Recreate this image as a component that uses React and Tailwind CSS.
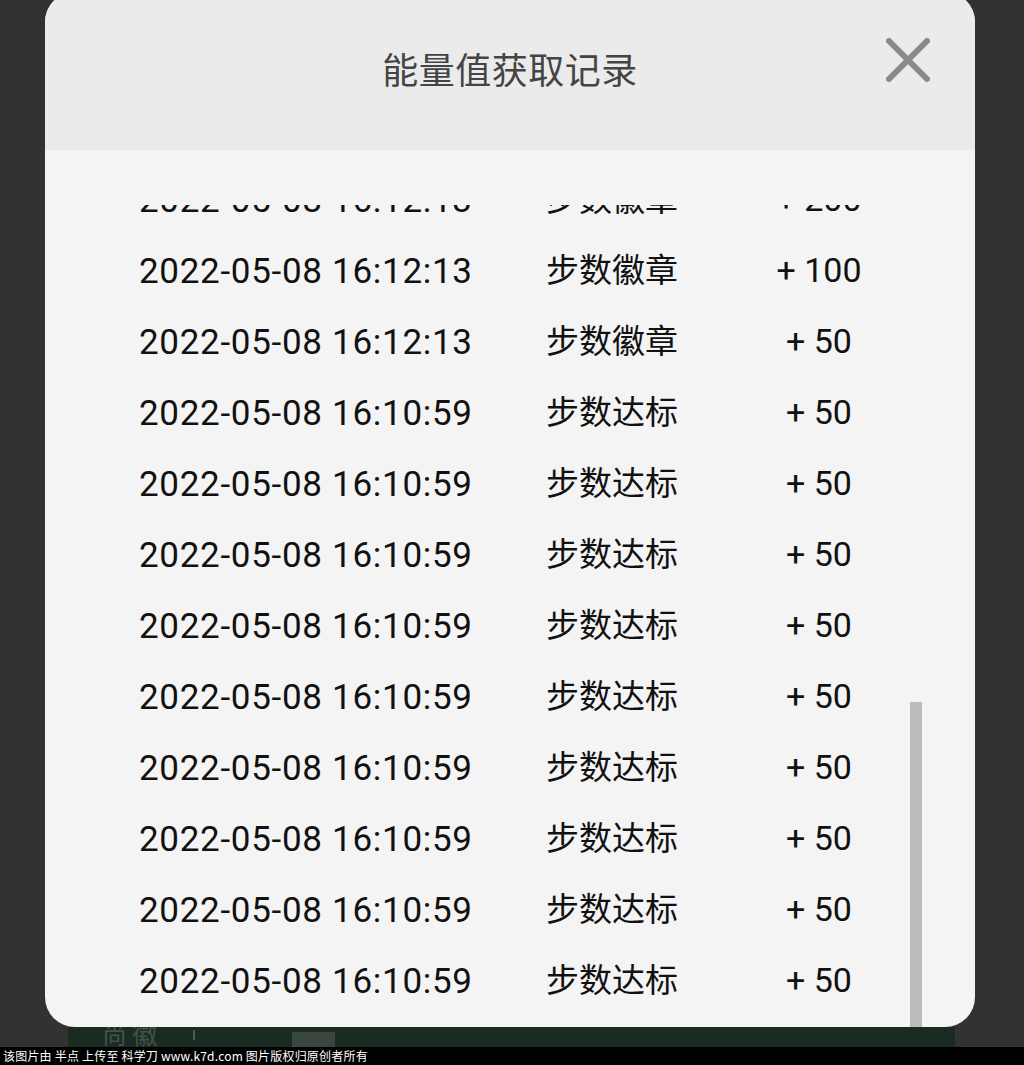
const rows = [
  { time: '2022-05-08 16:12:13', type: '步数徽章', value: '+ 200' },
  { time: '2022-05-08 16:12:13', type: '步数徽章', value: '+ 100' },
  { time: '2022-05-08 16:12:13', type: '步数徽章', value: '+ 50' },
  { time: '2022-05-08 16:10:59', type: '步数达标', value: '+ 50' },
  { time: '2022-05-08 16:10:59', type: '步数达标', value: '+ 50' },
  { time: '2022-05-08 16:10:59', type: '步数达标', value: '+ 50' },
  { time: '2022-05-08 16:10:59', type: '步数达标', value: '+ 50' },
  { time: '2022-05-08 16:10:59', type: '步数达标', value: '+ 50' },
  { time: '2022-05-08 16:10:59', type: '步数达标', value: '+ 50' },
  { time: '2022-05-08 16:10:59', type: '步数达标', value: '+ 50' },
  { time: '2022-05-08 16:10:59', type: '步数达标', value: '+ 50' },
  { time: '2022-05-08 16:10:59', type: '步数达标', value: '+ 50' },
  { time: '2022-05-08 16:10:59', type: '步数达标', value: '+ 50' },
]

function CloseIcon() {
  return (
    <svg width="44" height="44" viewBox="0 0 44 44" fill="none">
      <path d="M3 3 L41 41 M41 3 L3 41" stroke="#8a8a8a" strokeWidth="6" strokeLinecap="round" />
    </svg>
  )
}

export default function App() {
  return (
    <div className="w-full h-[1065px] overflow-hidden bg-[#323232] flex flex-col font-['Roboto','Noto_Sans_CJK_SC',sans-serif]">
      {/* Modal */}
      <div className="ml-[45px] w-[930px] mt-[-8px] h-[1035px] rounded-[30px] overflow-hidden bg-[#f4f4f4] flex flex-col">
        <div className="h-[158px] shrink-0 bg-[#ebebeb] relative flex items-center justify-center pb-[6px]">
          <h1 className="text-[36px] text-[#444] font-['Noto_Sans_CJK_SC',sans-serif] tracking-[0.5px]">能量值获取记录</h1>
          <button className="absolute right-[45px] top-[46px]">
            <CloseIcon />
          </button>
        </div>

        <div className="flex-1 pt-[55px] flex flex-col min-h-0">
          <div className="flex-1 overflow-hidden relative">
            <div className="mt-[-41px]">
              {rows.map((r, i) => (
                <div key={i} className="h-[71px] grid grid-cols-[501px_214px_118px] items-center text-[#111]">
                  <span className="pl-[94px] pt-[4px] text-[35px] tracking-[0.7px]">{r.time}</span>
                  <span className="pb-[4px] text-[33px] font-['Noto_Sans_CJK_SC',sans-serif]">{r.type}</span>
                  <span className="text-[34px] text-center">{r.value}</span>
                </div>
              ))}
            </div>
            {/* scrollbar */}
            <div className="absolute right-[53px] top-[497px] bottom-0 w-[12px] bg-[#bbbbbb]"></div>
          </div>
        </div>
      </div>

      {/* Page content peeking under the modal */}
      <div className="ml-[68px] w-[887px] h-[20px] bg-[#1a2b21] flex items-start overflow-hidden">
        <div className="ml-[34px] w-[60px] h-[20px] overflow-hidden">
          <span className="block mt-[-6px] text-[25px] leading-none text-[#44524a] font-['Noto_Sans_CJK_SC',sans-serif]">尚 徽</span>
        </div>
        <span className="ml-[31px] mt-[3px] w-[2px] h-[10px] bg-[#4a5a50]"></span>
        <span className="ml-[97px] mt-[5px] w-[43px] h-[15px] bg-[#3a4640]"></span>
      </div>

      {/* Watermark bar */}
      <div className="h-[18px] bg-black flex items-center pl-[3px]">
        <span className="text-[12px] leading-none text-white tracking-[0.2px] font-['Noto_Sans_CJK_SC',sans-serif]">
          该图片由 半点 上传至 科学刀 www.k7d.com 图片版权归原创者所有
        </span>
      </div>
    </div>
  )
}
